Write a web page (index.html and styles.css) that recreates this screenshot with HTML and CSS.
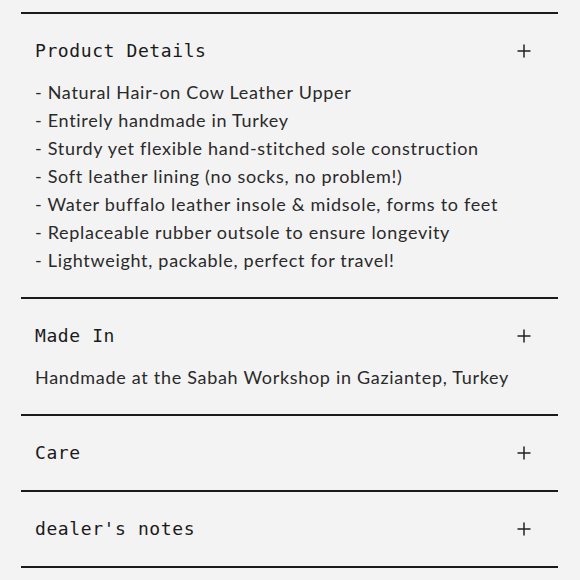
FILE: index.html
```html
<!DOCTYPE html>
<html>
<head>
<meta charset="utf-8">
<link rel="stylesheet" href="styles.css">
</head>
<body>
<div class="accordion">
  <section class="item">
    <div class="head">
      <h2 class="title">Product Details</h2>
      <svg class="plus" width="14" height="14" viewBox="0 0 14 14"><path d="M7 0.5V13.5M0.5 7H13.5" stroke="#222" stroke-width="1.5" fill="none"/></svg>
    </div>
    <div class="body">
      <p>- Natural Hair-on Cow Leather Upper</p>
      <p>- Entirely handmade in Turkey</p>
      <p>- Sturdy yet flexible hand-stitched sole construction</p>
      <p>- Soft leather lining (no socks, no problem!)</p>
      <p>- Water buffalo leather insole &amp; midsole, forms to feet</p>
      <p>- Replaceable rubber outsole to ensure longevity</p>
      <p>- Lightweight, packable, perfect for travel!</p>
    </div>
  </section>
  <section class="item">
    <div class="head">
      <h2 class="title">Made In</h2>
      <svg class="plus" width="14" height="14" viewBox="0 0 14 14"><path d="M7 0.5V13.5M0.5 7H13.5" stroke="#222" stroke-width="1.5" fill="none"/></svg>
    </div>
    <div class="body">
      <p>Handmade at the Sabah Workshop in Gaziantep, Turkey</p>
    </div>
  </section>
  <section class="item">
    <div class="head">
      <h2 class="title">Care</h2>
      <svg class="plus" width="14" height="14" viewBox="0 0 14 14"><path d="M7 0.5V13.5M0.5 7H13.5" stroke="#222" stroke-width="1.5" fill="none"/></svg>
    </div>
  </section>
  <section class="item">
    <div class="head">
      <h2 class="title">dealer's notes</h2>
      <svg class="plus" width="14" height="14" viewBox="0 0 14 14"><path d="M7 0.5V13.5M0.5 7H13.5" stroke="#222" stroke-width="1.5" fill="none"/></svg>
    </div>
  </section>
</div>
</body>
</html>
```

FILE: styles.css
```css
html, body {
  margin: 0;
  padding: 0;
  background: #f3f3f3;
}
.accordion {
  padding: 12px 22px 0 21px;
  color: #222;
}
.item {
  border-top: 2px solid #1a1a1a;
}
.item:last-child {
  border-bottom: 2px solid #1a1a1a;
}
.head {
  display: flex;
  align-items: center;
  justify-content: space-between;
  padding: 25px 27px 25px 14px;
}
.title {
  margin: 0;
  font-family: "DejaVu Sans Mono", monospace;
  font-weight: normal;
  font-size: 18px;
  line-height: 24px;
  letter-spacing: 0.6px;
  color: #1a1a1a;
}
.plus {
  display: block;
}
.body {
  margin-top: -10px;
  padding: 0 14px 23px;
  font-family: Lato, sans-serif;
  font-size: 18px;
  line-height: 28px;
  letter-spacing: 0.7px;
  color: #2a2a2a;
}
.body p {
  margin: 0;
}
```
